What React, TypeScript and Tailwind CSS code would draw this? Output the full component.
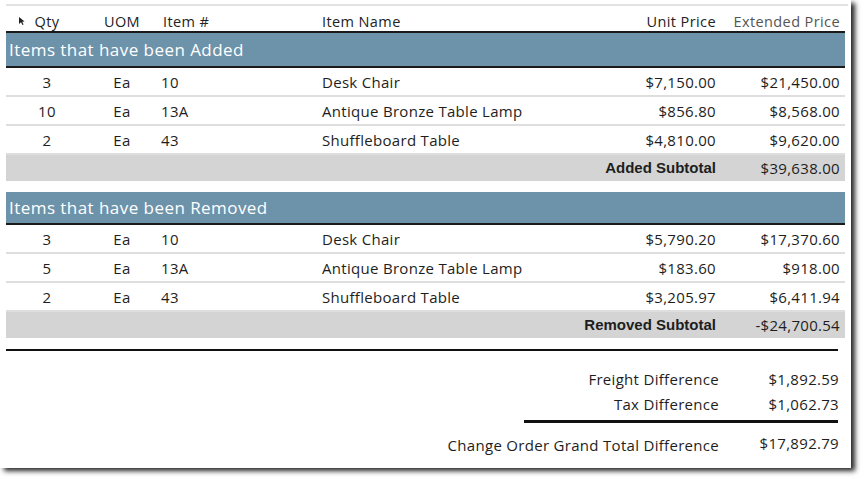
import React from "react";

type Line = { qty: string; uom: string; item: string; name: string; unit: string; ext: string };

const added: Line[] = [
  { qty: "3", uom: "Ea", item: "10", name: "Desk Chair", unit: "$7,150.00", ext: "$21,450.00" },
  { qty: "10", uom: "Ea", item: "13A", name: "Antique Bronze Table Lamp", unit: "$856.80", ext: "$8,568.00" },
  { qty: "2", uom: "Ea", item: "43", name: "Shuffleboard Table", unit: "$4,810.00", ext: "$9,620.00" }
];

const removed: Line[] = [
  { qty: "3", uom: "Ea", item: "10", name: "Desk Chair", unit: "$5,790.20", ext: "$17,370.60" },
  { qty: "5", uom: "Ea", item: "13A", name: "Antique Bronze Table Lamp", unit: "$183.60", ext: "$918.00" },
  { qty: "2", uom: "Ea", item: "43", name: "Shuffleboard Table", unit: "$3,205.97", ext: "$6,411.94" }
];

const fontClass = "font-['Open_Sans',sans-serif]";

function ItemRow({ line }: { line: Line }) {
  return (
    <div className="flex h-[29px] items-center border-b-2 border-[#dedede] pt-[2px] text-[15px] tracking-[0.3px] text-[#1e1e1e]">
      <div className="w-[82px] text-center">{line.qty}</div>
      <div className="w-[68px] text-center">{line.uom}</div>
      <div className="w-[166px] pl-[5px]">{line.item}</div>
      <div className="w-[238px]">{line.name}</div>
      <div className="w-[156px] text-right">{line.unit}</div>
      <div className="w-[127px] pr-[3px] text-right">{line.ext}</div>
    </div>
  );
}

type SectionProps = { title: string; lines: Line[]; subtotalLabel: string; subtotal: string; bandClass: string };

function Section({ title, lines, subtotalLabel, subtotal, bandClass }: SectionProps) {
  return (
    <div>
      <div className={`flex items-center border-b-2 border-[#1a1a1a] bg-[#6d93ab] pl-[3px] text-[17px] tracking-[0.45px] text-white ${bandClass}`}>
        {title}
      </div>
      {lines.map((line) => (
        <ItemRow key={line.qty + line.item + line.name} line={line} />
      ))}
      <div className="flex h-[26px] items-center bg-[#d4d4d4] text-[#1e1e1e]">
        <div className="w-[710px] text-right font-['Liberation_Sans',sans-serif] text-[15px] font-bold">{subtotalLabel}</div>
        <div className="w-[127px] pr-[3px] pt-[1px] text-right text-[15px] tracking-[0.3px]">{subtotal}</div>
      </div>
    </div>
  );
}

function Cursor() {
  return (
    <svg width="8" height="10" viewBox="0 0 8 10" className="absolute left-[18px] top-[16px]">
      <path d="M1 1 L1 8 L3 6.3 L4.5 9 L5.6 8.4 L4.2 5.8 L6.6 5.6 Z" fill="#222" />
    </svg>
  );
}

export default function App() {
  return (
    <div className={`h-[479px] w-[868px] bg-white ${fontClass}`}>
      <div className="relative h-[468px] w-[851px] bg-white px-[6px] pt-[4px] shadow-[4px_3px_5px_rgba(0,0,0,0.85)]">
        <Cursor />
        <div className="h-[2px] w-[842px] bg-[#e2e2e2]" />
        <div className="flex h-[27px] items-center border-b-2 border-[#1a1a1a] pt-[6px] text-[14.5px] tracking-[0.4px] text-[#222]">
          <div className="w-[82px] text-center">Qty</div>
          <div className="w-[68px] text-center">UOM</div>
          <div className="w-[166px] pl-[7px]">Item #</div>
          <div className="w-[238px]">Item Name</div>
          <div className="w-[156px] text-right">Unit Price</div>
          <div className="w-[127px] pr-[3px] text-right text-[#555]">Extended Price</div>
        </div>
        <Section title="Items that have been Added" lines={added} subtotalLabel="Added Subtotal" subtotal="$39,638.00" bandClass="h-[35px]" />
        <div className="h-[11px]" />
        <Section title="Items that have been Removed" lines={removed} subtotalLabel="Removed Subtotal" subtotal="-$24,700.54" bandClass="h-[33px]" />
        <div className="mt-[11px] h-[1.5px] w-[832px] bg-[#111]" />
        <div className="mt-[16px] flex flex-col text-[15px] tracking-[0.3px] text-[#1e1e1e]">
          <div className="flex h-[25px] items-center">
            <div className="w-[713px] text-right">Freight Difference</div>
            <div className="w-[120px] text-right">$1,892.59</div>
          </div>
          <div className="flex h-[25px] items-center">
            <div className="w-[713px] text-right">Tax Difference</div>
            <div className="w-[120px] text-right">$1,062.73</div>
          </div>
          <div className="ml-[518px] mt-[3px] h-[3px] w-[314px] bg-[#111]" />
          <div className="mt-[9px] flex items-start">
            <div className="w-[713px] pt-[2px] text-right">Change Order Grand Total Difference</div>
            <div className="w-[120px] text-right">$17,892.79</div>
          </div>
        </div>
      </div>
    </div>
  );
}
